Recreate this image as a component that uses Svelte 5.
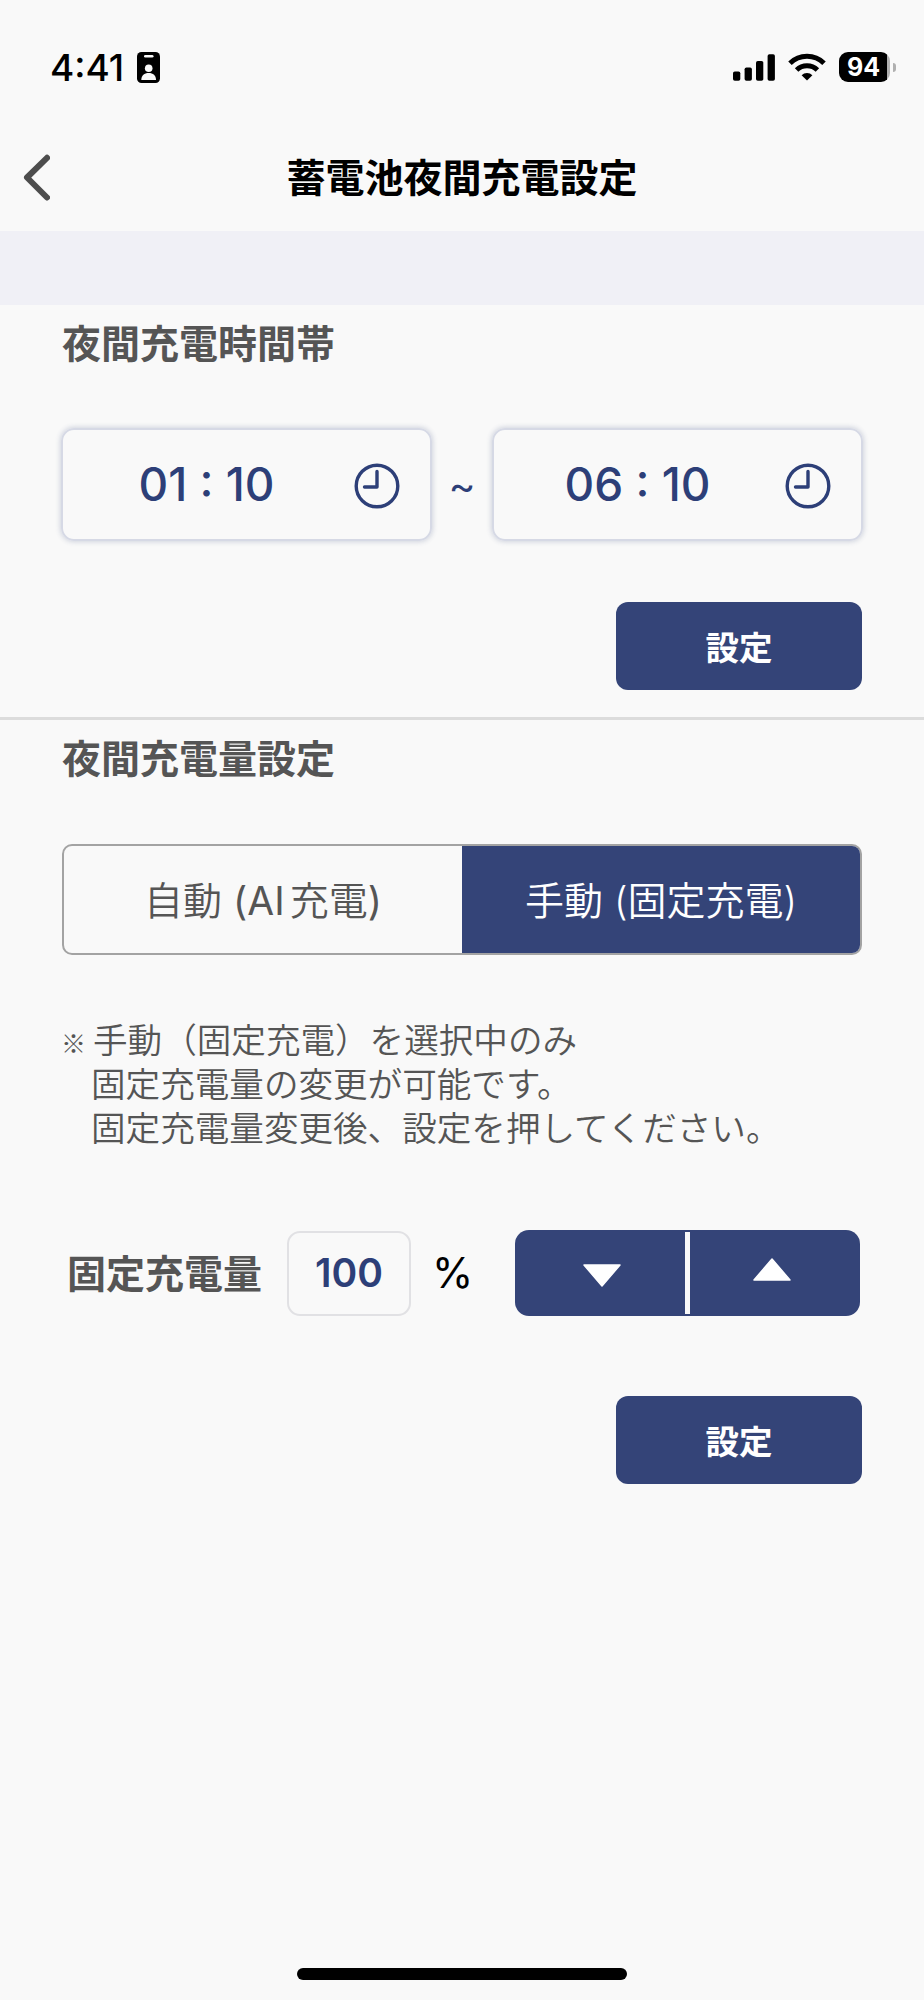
<script>
    let startTime = $state({ hour: "01", minute: "10" });
    let endTime = $state({ hour: "06", minute: "10" });
    let mode = $state("manual");
    let amount = $state(100);

    function changeAmount(step) {
        if (mode !== "manual") return;
        amount = Math.min(100, Math.max(0, amount + step));
    }
</script>

{#snippet timeField(time)}
    <button type="button" class="time-field">
        <span class="time-value">{time.hour} : {time.minute}</span>
        <svg class="clock" viewBox="0 0 46 46">
            <circle cx="23" cy="23" r="20.8" />
            <path d="M23 8.5V24H10.5" />
        </svg>
    </button>
{/snippet}

<div class="screen">
    <div class="status-bar">
        <div class="status-left">
            <span class="clock-text">4:41</span>
            <svg class="badge" viewBox="0 0 23 31">
                <rect width="23" height="31" rx="4.5" />
                <rect x="7" y="3" width="9.5" height="2.6" rx="1.3" fill="#f9f9f9" />
                <circle cx="11.7" cy="16.3" r="3.8" fill="#f9f9f9" />
                <path d="M4.3 28C4.3 23.5 7.3 21 11.7 21S19 23.5 19 28Z" fill="#f9f9f9" />
            </svg>
        </div>
        <div class="status-right">
            <svg class="signal" viewBox="0 0 42 27">
                <rect y="17.5" width="7.3" height="9.2" rx="1.8" />
                <rect x="11.6" y="13.5" width="7.3" height="13.2" rx="1.8" />
                <rect x="23" y="7" width="7.3" height="19.7" rx="1.8" />
                <rect x="34.6" y="0.3" width="7.3" height="26.4" rx="1.8" />
            </svg>
            <svg class="wifi" viewBox="0 0 38 28">
                <g fill="none" stroke="#000" stroke-width="5">
                    <path d="M2 10.3A24.2 24.2 0 0 1 36 10.3" />
                    <path d="M8.6 17A15 15 0 0 1 29.4 17" />
                </g>
                <path d="M19 27.6L13.6 22.2A7.6 7.6 0 0 1 24.4 22.2Z" />
            </svg>
            <div class="battery">
                <span class="battery-level">94</span>
                <span class="battery-cap"></span>
            </div>
        </div>
    </div>

    <header>
        <button type="button" class="back" aria-label="戻る">
            <svg viewBox="0 0 28 48">
                <path d="M25 3.8L5 23.5L25 43.5" />
            </svg>
        </button>
        <h1>蓄電池夜間充電設定</h1>
    </header>
    <div class="band"></div>

    <section class="hours">
        <h2>夜間充電時間帯</h2>
        <div class="time-row">
            {@render timeField(startTime)}
            <span class="tilde">~</span>
            {@render timeField(endTime)}
        </div>
        <button type="button" class="submit">設定</button>
    </section>

    <section class="charge">
        <h2>夜間充電量設定</h2>
        <div class="segmented">
            <button
                type="button"
                class="segment"
                class:active={mode === "auto"}
                onclick={() => (mode = "auto")}
            >
                自動 <span class="latin">(AI</span>充電<span class="paren">)</span>
            </button>
            <button
                type="button"
                class="segment"
                class:active={mode === "manual"}
                onclick={() => (mode = "manual")}
            >
                手動 (固定充電)
            </button>
        </div>

        <div class="note">
            <span class="mark">※</span>
            <p>
                <span class="first">手動（固定充電）を選択中のみ</span><br />
                固定充電量の変更が可能です。<br />
                固定充電量変更後、設定を押してください。
            </p>
        </div>

        <div class="amount-row">
            <span class="amount-label">固定充電量</span>
            <span class="amount">{amount}</span>
            <span class="unit">%</span>
            <div class="stepper">
                <button type="button" aria-label="減らす" onclick={() => changeAmount(-10)}>
                    <svg class="down" viewBox="0 0 38 23"><path d="M1 1H37L19 22Z" /></svg>
                </button>
                <span class="separator"></span>
                <button type="button" aria-label="増やす" onclick={() => changeAmount(10)}>
                    <svg class="up" viewBox="0 0 38 23"><path d="M1 22H37L19 1Z" /></svg>
                </button>
            </div>
        </div>
        <button type="button" class="submit">設定</button>
    </section>

    <div class="home-indicator"></div>
</div>

<style>
    :global(body) {
        background: #f9f9f9;
    }

    .screen {
        display: flex;
        flex-direction: column;
        box-sizing: border-box;
        width: 924px;
        height: 2000px;
        overflow: hidden;
        background: #f9f9f9;
        color: #555;
        font-family: Inter, "Noto Sans CJK JP", sans-serif;
    }

    button {
        margin: 0;
        padding: 0;
        border: none;
        background: none;
        color: inherit;
        font: inherit;
        cursor: pointer;
    }

    h1,
    h2,
    p {
        margin: 0;
    }

    svg {
        display: block;
        flex: none;
    }

    .status-bar {
        display: flex;
        justify-content: space-between;
        align-items: center;
        height: 134px;
        padding: 0 28px 0 50px;
        color: #000;
    }

    .status-left {
        display: flex;
        align-items: center;
        gap: 12px;
    }

    .clock-text {
        width: 75px;
        font-size: 37px;
        font-weight: 550;
        white-space: nowrap;
    }

    .badge {
        width: 23px;
        height: 31px;
    }

    .status-right {
        display: flex;
        align-items: center;
        gap: 13px;
    }

    .signal {
        width: 42px;
        height: 27px;
    }

    .wifi {
        width: 38px;
        height: 28px;
    }

    .battery {
        display: flex;
        align-items: center;
        gap: 3px;
    }

    .battery-level {
        width: 51px;
        height: 30px;
        border-radius: 9px;
        background: linear-gradient(90deg, #000 48px, #b0b0b0 48px);
        color: #fff;
        font-size: 25px;
        font-weight: 700;
        line-height: 30px;
        text-align: center;
        text-indent: -2px;
    }

    .battery-cap {
        width: 3px;
        height: 9px;
        border-radius: 0 3px 3px 0;
        background: #b0b0b0;
    }

    header {
        display: grid;
        grid-template-columns: 64px 1fr 64px;
        align-items: center;
        height: 97px;
    }

    .back {
        padding: 0 0 10px 22px;
    }

    .back svg {
        width: 28px;
        height: 48px;
        fill: none;
        stroke: #4d4d4d;
        stroke-width: 6;
        stroke-linecap: round;
        stroke-linejoin: round;
    }

    h1 {
        padding-bottom: 10px;
        color: #000;
        font-size: 39px;
        font-weight: 700;
        line-height: 60px;
        text-align: center;
    }

    .band {
        height: 74px;
        background: #f0f0f6;
    }

    section {
        display: flex;
        flex-direction: column;
        padding: 0 61px;
    }

    .hours {
        height: 412px;
        border-bottom: 3px solid #dcdcdc;
    }

    h2 {
        padding-left: 1px;
        font-size: 39px;
        font-weight: 700;
        line-height: 60px;
    }

    .hours h2 {
        margin-top: 9px;
    }

    .charge h2 {
        margin-top: 9px;
    }

    .time-row {
        display: flex;
        justify-content: space-between;
        align-items: center;
        margin-top: 54px;
    }

    .time-field {
        display: flex;
        align-items: center;
        box-sizing: border-box;
        width: 371px;
        height: 113px;
        padding-right: 30px;
        border: 2px solid #d6d9e5;
        border-radius: 13px;
        box-shadow: 0 0 5px 1px rgba(52, 68, 120, 0.2);
        color: #2d3f78;
    }

    .time-value {
        flex: 1;
        padding: 0 4px 1px 0;
        font-size: 46px;
        font-weight: 500;
        text-align: center;
    }

    .clock {
        width: 46px;
        height: 46px;
        margin-top: 3px;
        fill: none;
        stroke: #2d3f78;
        stroke-width: 3.4;
        stroke-linecap: round;
        stroke-linejoin: round;
    }

    .tilde {
        color: #2d3f78;
        font-size: 41px;
        font-weight: 400;
    }

    .submit {
        align-self: flex-end;
        width: 246px;
        height: 88px;
        margin-right: 1px;
        padding-bottom: 2px;
        border-radius: 12px;
        background: #344478;
        color: #fff;
        font-size: 33.5px;
        font-weight: 700;
    }

    .hours .submit {
        margin-top: 61px;
    }

    .segmented {
        display: flex;
        box-sizing: border-box;
        height: 111px;
        margin: 55px 0 0 1px;
        width: 800px;
        border: 2px solid #a3a3a3;
        border-radius: 10px;
        overflow: hidden;
    }

    .segment {
        flex: 1;
        padding-bottom: 4px;
        font-size: 39px;
        font-weight: 350;
    }

    .segment.active {
        background: #344478;
        color: #fff;
    }

    .latin {
        margin-right: 5px;
        font-weight: 400;
    }

    .paren {
        font-weight: 400;
    }

    .note {
        display: flex;
        margin-top: 63px;
        font-size: 34.6px;
        font-weight: 350;
        line-height: 44px;
    }

    .mark {
        width: 30px;
        padding-top: 2px;
        font-family: "Noto Sans CJK JP", sans-serif;
        font-size: 25px;
        font-weight: 500;
    }

    .first {
        margin-left: 2px;
    }

    .amount-row {
        display: flex;
        align-items: center;
        height: 86px;
        margin-top: 80px;
        padding-left: 6px;
    }

    .amount-label {
        width: 220px;
        padding-bottom: 4px;
        font-size: 39px;
        font-weight: 700;
    }

    .amount {
        box-sizing: border-box;
        width: 124px;
        height: 85px;
        border: 2px solid #e1e1e4;
        border-radius: 13px;
        color: #2d3f78;
        font-size: 39px;
        font-weight: 600;
        line-height: 79px;
        text-align: center;
    }

    .unit {
        box-sizing: border-box;
        width: 104px;
        padding: 0 0 2px 21px;
        color: #000;
        font-size: 42px;
    }

    .stepper {
        display: flex;
        align-items: center;
        width: 345px;
        height: 86px;
        border-radius: 14px;
        background: #344478;
    }

    .stepper button {
        display: flex;
        flex: 1;
        justify-content: center;
        align-items: center;
        height: 100%;
    }

    .stepper svg {
        width: 38px;
        height: 23px;
        fill: #fff;
        stroke: #fff;
        stroke-width: 1.5;
        stroke-linejoin: round;
    }

    .down {
        margin: 5px 0 0 4px;
    }

    .up {
        margin: 0 6px 7px 0;
    }

    .separator {
        width: 5px;
        height: 82px;
        background: #f9f9f9;
    }

    .charge .submit {
        margin-top: 80px;
    }

    .home-indicator {
        align-self: center;
        width: 330px;
        height: 12px;
        margin: auto 0 20px;
        border-radius: 6px;
        background: #000;
    }
</style>
